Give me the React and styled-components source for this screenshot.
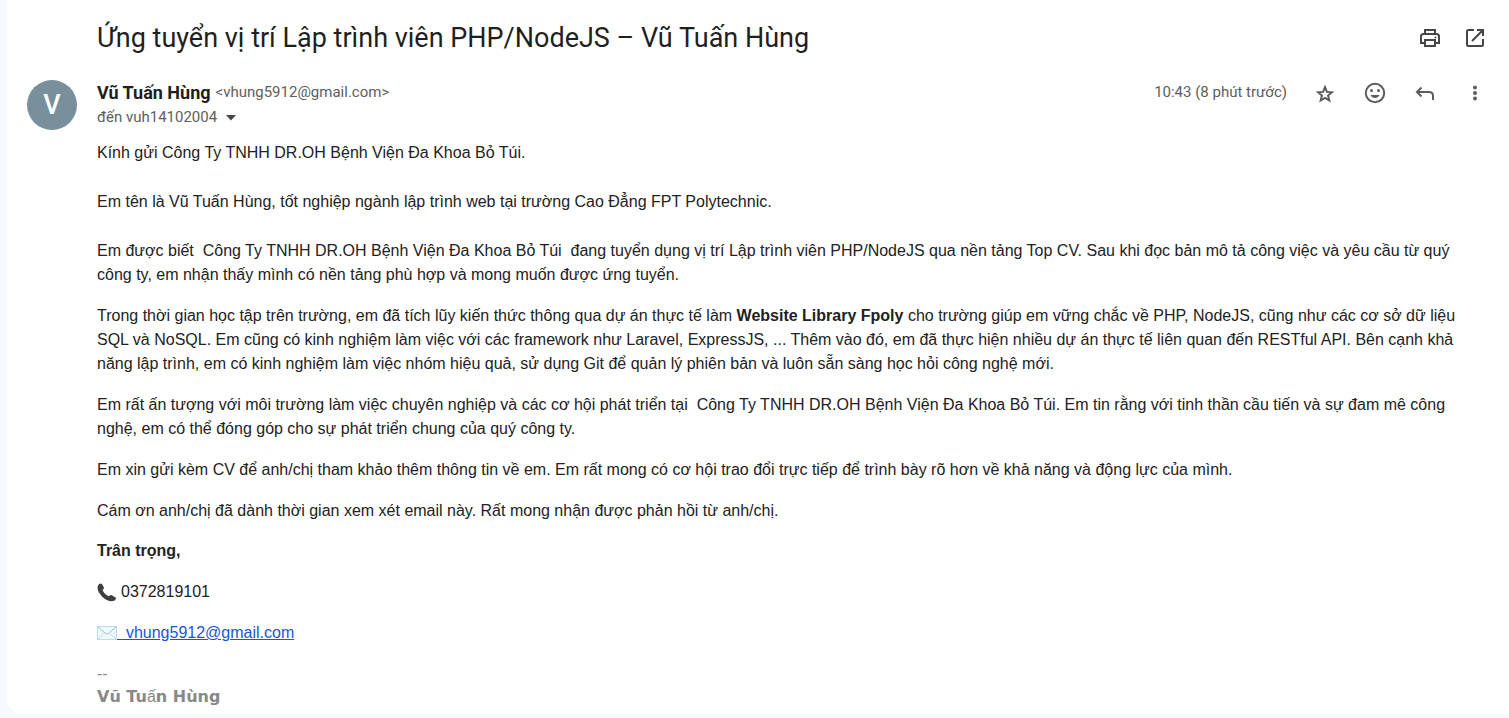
import React from "react";
import styled, { createGlobalStyle } from "styled-components";

const GlobalStyle = createGlobalStyle`
  * { box-sizing: border-box; }
  body {
    margin: 0;
    background: #f6f9fe;
    color: #222;
    font-family: "Liberation Sans", Arial, sans-serif;
  }
`;

const display = `Roboto, "Open Sans", sans-serif`;

const Card = styled.main`
  margin: 0 0 4px 7px;
  padding: 20px 22px 6px 20px;
  background: #fff;
  border-bottom-left-radius: 16px;
`;

const SubjectRow = styled.header`
  display: flex;
  align-items: center;
  justify-content: space-between;
  padding-left: 70px;
  margin-bottom: 24px;
`;

const Subject = styled.h1`
  margin: 0;
  font: 400 27px/36px ${display};
  color: #1f1f1f;
`;

const Actions = styled.div`
  display: flex;
  align-items: center;
  gap: ${(p) => p.$gap}px;
`;

const IconButton = styled.button`
  display: flex;
  width: 24px;
  height: 24px;
  padding: 0;
  border: 0;
  background: none;
  color: ${(p) => (p.$soft ? "#5a5d5c" : "#444746")};
  cursor: pointer;
`;

const Message = styled.article`
  display: flex;
  gap: 20px;
`;

const Avatar = styled.div`
  flex: none;
  width: 50px;
  height: 50px;
  border-radius: 50%;
  background: #78909c;
  color: #fff;
  font: 500 27px/50px ${display};
  text-align: center;
`;

const Content = styled.div`
  flex: 1;
  min-width: 0;
`;

const MessageHeader = styled.div`
  display: flex;
  align-items: flex-start;
  justify-content: space-between;
  margin-bottom: 11px;
`;

const Sender = styled.div`
  display: flex;
  align-items: center;
  gap: 5px;
`;

const SenderName = styled.h2`
  margin: 0;
  font: 700 18px/25px ${display};
  color: #1f1f1f;
`;

const Meta = styled.span`
  font: 400 15px/25px ${display};
  color: #5e5e5e;
`;

const Recipient = styled.button`
  display: flex;
  align-items: center;
  gap: 9px;
  padding: 0;
  border: 0;
  background: none;
  font: 400 15px/25px ${display};
  color: #5e5e5e;
  cursor: pointer;
`;

const Body = styled.div`
  display: flex;
  flex-direction: column;
  gap: ${(p) => p.$gap}px;
  margin-bottom: ${(p) => p.$after}px;
  font-size: 16px;
  line-height: 24px;
`;

const Paragraph = styled.p`
  margin: 0;
`;

const ContactLine = styled.p`
  display: flex;
  align-items: center;
  gap: 4px;
  margin: 0;
`;

const MailLink = styled.a`
  display: flex;
  align-items: center;
  color: #1a55d8;
  white-space: pre;
`;

const Signature = styled.footer`
  color: #888;
  font-size: 16px;
  line-height: 23px;
`;

const SignatureName = styled.div`
  font: 700 16px/23px "DejaVu Sans", sans-serif;
`;

const ThinGlyph = styled.span`
  font-family: "Liberation Sans", Arial, sans-serif;
  font-weight: 400;
`;

const Svg = ({ children, ...rest }) => (
  <svg width="24" height="24" viewBox="0 0 24 24" fill="none" stroke="currentColor" strokeWidth="2" aria-hidden="true" {...rest}>
    {children}
  </svg>
);

const PrintIcon = () => (
  <Svg>
    <path d="M7 8V4h10v4M6 17H3v-6.500C3 9 4 8 5.500 8h13C20 8 21 9 21 10.500V17h-3" />
    <path d="M7 14h10v6H7z" />
    <circle cx="17.500" cy="11.500" r="1" fill="currentColor" stroke="none" />
  </Svg>
);

const OpenIcon = () => (
  <Svg>
    <path d="M11 4H5.500Q4 4 4 5.500v13Q4 20 5.500 20h13q1.500 0 1.500-1.500V13M14 4h6v6M20 4L9 15" />
  </Svg>
);

const StarIcon = () => (
  <Svg>
    <path d="M12 6.200l1.900 4.700 5 .4-3.800 3.300 1.200 4.900-4.300-2.600-4.300 2.600 1.200-4.900-3.800-3.300 5-.4z" />
  </Svg>
);

const EmojiIcon = () => (
  <Svg>
    <circle cx="12" cy="12" r="9.200" />
    <circle cx="8.500" cy="9.500" r="1.500" fill="currentColor" stroke="none" />
    <circle cx="15.500" cy="9.500" r="1.500" fill="currentColor" stroke="none" />
    <path d="M7.500 14h9c-.8 1.900-2.500 3-4.500 3s-3.700-1.100-4.500-3z" fill="currentColor" stroke="none" />
  </Svg>
);

const ReplyIcon = () => (
  <Svg>
    <path d="M8.500 6.500L4 11l4.500 4.500M4 11h12q4 0 4 4v4" />
  </Svg>
);

const MoreIcon = () => (
  <Svg>
    <g fill="currentColor" stroke="none">
      <circle cx="12" cy="6.500" r="2" />
      <circle cx="12" cy="12" r="2" />
      <circle cx="12" cy="17.500" r="2" />
    </g>
  </Svg>
);

const CaretIcon = () => (
  <svg width="10" height="6" viewBox="0 0 10 6" aria-hidden="true">
    <path d="M0 0h10L5 5.500z" fill="#444746" />
  </svg>
);

const PhoneIcon = () => (
  <svg width="20" height="20" viewBox="0 0 20 20" aria-hidden="true">
    <path
      d="M1 3.500C2 1.500 4 .8 5 2l1.800 3.200c.5 1-.1 1.700-1 2.400-.5.500.8 2.600 2.300 4.100s3.600 2.900 4.200 2.400c.7-.8 1.400-1.400 2.400-.9l3.600 2.100c1.300 1 .3 2.600-1.300 3.500-3.300 1.600-8.600-1-12-4.400S-.4 6.600 1 3.500z"
      fill="#3d4043"
    />
  </svg>
);

const EnvelopeIcon = () => (
  <svg width="20" height="14" viewBox="0 0 20 14" aria-hidden="true">
    <path d="M.5.500h19v13H.5z" fill="#f1f9fd" stroke="#b5dcef" />
    <path d="M1 13l6.500-6M19 13l-6.500-6" fill="none" stroke="#b5dcef" />
    <path d="M1 1l7.500 6.500q1.500 1.200 3 0L19 1" fill="none" stroke="#8fc3dd" />
  </svg>
);

const paragraphs = [
  <>
    Trong thời gian học tập trên trường, em đã tích lũy kiến thức thông qua dự án thực tế làm{" "}
    <strong>Website Library Fpoly</strong> cho trường giúp em vững chắc về PHP, NodeJS, cũng như các cơ sở dữ liệu SQL và
    NoSQL. Em cũng có kinh nghiệm làm việc với các framework như Laravel, ExpressJS, ... Thêm vào đó, em đã thực hiện
    nhiều dự án thực tế liên quan đến RESTful API. Bên cạnh khả năng lập trình, em có kinh nghiệm làm việc nhóm hiệu quả,
    sử dụng Git để quản lý phiên bản và luôn sẵn sàng học hỏi công nghệ mới.
  </>,
  "Em rất ấn tượng với môi trường làm việc chuyên nghiệp và các cơ hội phát triển tại \u00a0Công Ty TNHH DR.OH Bệnh Viện Đa Khoa Bỏ Túi. Em tin rằng với tinh thần cầu tiến và sự đam mê công nghệ, em có thể đóng góp cho sự phát triển chung của quý công ty.",
  "Em xin gửi kèm CV để anh/chị tham khảo thêm thông tin về em. Em rất mong có cơ hội trao đổi trực tiếp để trình bày rõ hơn về khả năng và động lực của mình.",
  "Cám ơn anh/chị đã dành thời gian xem xét email này. Rất mong nhận được phản hồi từ anh/chị.",
];

export default function App() {
  return (
    <>
      <GlobalStyle />
      <Card lang="vi">
        <SubjectRow>
          <Subject>Ứng tuyển vị trí Lập trình viên PHP/NodeJS – Vũ Tuấn Hùng</Subject>
          <Actions $gap={21}>
            <IconButton aria-label="In"><PrintIcon /></IconButton>
            <IconButton aria-label="Mở trong cửa sổ mới"><OpenIcon /></IconButton>
          </Actions>
        </SubjectRow>
        <Message>
          <Avatar>V</Avatar>
          <Content>
            <MessageHeader>
              <div>
                <Sender>
                  <SenderName>Vũ Tuấn Hùng</SenderName>
                  <Meta>&lt;vhung5912@gmail.com&gt;</Meta>
                </Sender>
                <Recipient>
                  đến vuh14102004 <CaretIcon />
                </Recipient>
              </div>
              <Actions $gap={26}>
                <Meta as="time">10:43 (8 phút trước)</Meta>
                <IconButton $soft aria-label="Gắn dấu sao"><StarIcon /></IconButton>
                <IconButton $soft aria-label="Thêm biểu tượng cảm xúc"><EmojiIcon /></IconButton>
                <IconButton $soft aria-label="Trả lời"><ReplyIcon /></IconButton>
                <IconButton $soft aria-label="Khác"><MoreIcon /></IconButton>
              </Actions>
            </MessageHeader>
            <Body $gap={25} $after={17}>
              <Paragraph>Kính gửi Công Ty TNHH DR.OH Bệnh Viện Đa Khoa Bỏ Túi.</Paragraph>
              <Paragraph>Em tên là Vũ Tuấn Hùng, tốt nghiệp ngành lập trình web tại trường Cao Đẳng FPT Polytechnic.</Paragraph>
              <Paragraph>
                {"Em được biết \u00a0Công Ty TNHH DR.OH Bệnh Viện Đa Khoa Bỏ Túi \u00a0đang tuyển dụng vị trí Lập trình viên PHP/NodeJS qua nền tảng Top CV. Sau khi đọc bản mô tả công việc và yêu cầu từ quý công ty, em nhận thấy mình có nền tảng phù hợp và mong muốn được ứng tuyển."}
              </Paragraph>
            </Body>
            <Body $gap={17} $after={16}>
              {paragraphs.map((text, i) => (
                <Paragraph key={i}>{text}</Paragraph>
              ))}
            </Body>
            <Body $gap={17} $after={17}>
              <Paragraph><strong>Trân trọng,</strong></Paragraph>
              <ContactLine><PhoneIcon />0372819101</ContactLine>
              <ContactLine>
                <MailLink href="mailto:vhung5912@gmail.com">
                  <EnvelopeIcon />{"\u00a0\u00a0vhung5912@gmail.com"}
                </MailLink>
              </ContactLine>
            </Body>
            <Signature>
              <div>--</div>
              <SignatureName>Vũ Tu<ThinGlyph>ấ</ThinGlyph>n Hùng</SignatureName>
            </Signature>
          </Content>
        </Message>
      </Card>
    </>
  );
}
